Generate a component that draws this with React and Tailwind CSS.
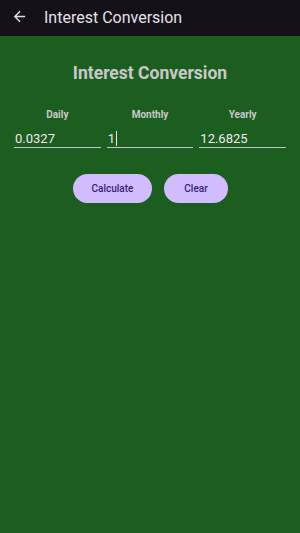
import React from "react";

export default function App() {
  const font = { fontFamily: "Roboto, 'Noto Sans', sans-serif" };
  return (
    <div className="w-[300px] h-[533px] bg-[#1b5e20] flex flex-col" style={font}>
      <div className="h-[36px] bg-[#141218] flex items-center shrink-0">
        <div className="w-[44px] flex items-center justify-center">
          <svg width="17" height="17" viewBox="0 0 24 24" className="ml-[-6px] mt-[-3px]">
            <path d="M20 11H7.83l5.59-5.59L12 4l-8 8 8 8 1.41-1.41L7.83 13H20v-2z" fill="#e6e0e9" />
          </svg>
        </div>
        <span className="text-[16px] text-[#e6e0e9] leading-none">Interest Conversion</span>
      </div>
      <div className="flex flex-col items-center pt-[26px]">
        <h1 className="text-[17.5px] font-bold text-[#c9c9c9] leading-[22px]">Interest Conversion</h1>
      </div>
      <div className="grid grid-cols-3 gap-[6px] px-[14px] mt-[24px]">
        {[
          ["Daily", "0.0327", false],
          ["Monthly", "1", true],
          ["Yearly", "12.6825", false],
        ].map(([label, value, focused]) => (
          <div key={label} className="flex flex-col">
            <div className="text-center text-[10px] font-bold text-[#c9c9c9] leading-[14px]">{label}</div>
            <div className="mt-[7px] h-[19px] flex items-center border-b-[1.5px] border-[#c4c4c4]">
              <span className="text-[13px] text-[#ececec] leading-none pl-px">{value}</span>
              {focused && <span className="w-[1.5px] h-[15px] bg-[#ececec] ml-px"></span>}
            </div>
          </div>
        ))}
      </div>
      <div className="flex justify-center gap-[12px] mt-[26px] pl-px">
        <button className="w-[79px] h-[29px] rounded-full bg-[#d0bcff] text-[10px] text-[#381e72] font-medium">
          Calculate
        </button>
        <button className="w-[64px] h-[29px] rounded-full bg-[#d0bcff] text-[10px] text-[#381e72] font-medium">
          Clear
        </button>
      </div>
    </div>
  );
}
